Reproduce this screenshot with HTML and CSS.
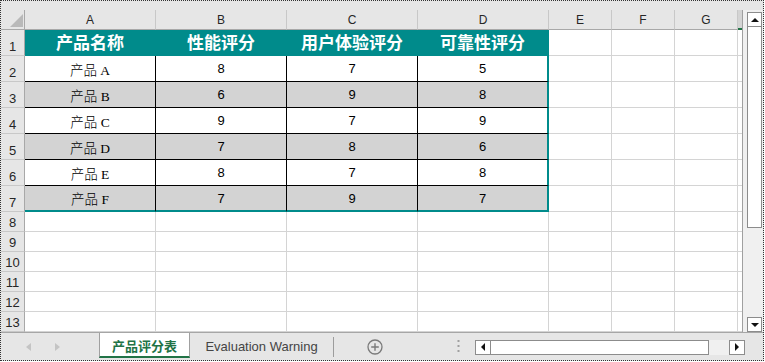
FILE: index.html
```html
<!DOCTYPE html>
<html>
<head>
<meta charset="utf-8">
<link rel="stylesheet" href="styles.css">
</head>
<body>
<div class="frame">
  <div class="main">
    <div class="sheet">
      <div class="corner"><span class="tri"></span></div>
      <div class="ch">A</div><div class="ch">B</div><div class="ch">C</div><div class="ch">D</div><div class="ch">E</div><div class="ch">F</div><div class="ch">G</div><div class="ch chh"></div>

      <div class="rh">1</div>
      <div class="c hd">产品名称</div><div class="c hd">性能评分</div><div class="c hd">用户体验评分</div><div class="c hd dl">可靠性评分</div>
      <div class="c"></div><div class="c"></div><div class="c"></div><div class="c h"></div>

      <div class="rh">2</div>
      <div class="c d nm">产品 A</div><div class="c d">8</div><div class="c d">7</div><div class="c d dl">5</div>
      <div class="c"></div><div class="c"></div><div class="c"></div><div class="c h"></div>

      <div class="rh">3</div>
      <div class="c d g nm">产品 B</div><div class="c d g">6</div><div class="c d g">9</div><div class="c d g dl">8</div>
      <div class="c"></div><div class="c"></div><div class="c"></div><div class="c h"></div>

      <div class="rh">4</div>
      <div class="c d nm">产品 C</div><div class="c d">9</div><div class="c d">7</div><div class="c d dl">9</div>
      <div class="c"></div><div class="c"></div><div class="c"></div><div class="c h"></div>

      <div class="rh">5</div>
      <div class="c d g nm">产品 D</div><div class="c d g">7</div><div class="c d g">8</div><div class="c d g dl">6</div>
      <div class="c"></div><div class="c"></div><div class="c"></div><div class="c h"></div>

      <div class="rh">6</div>
      <div class="c d nm">产品 E</div><div class="c d">8</div><div class="c d">7</div><div class="c d dl">8</div>
      <div class="c"></div><div class="c"></div><div class="c"></div><div class="c h"></div>

      <div class="rh">7</div>
      <div class="c d g nm last">产品 F</div><div class="c d g last">7</div><div class="c d g last">9</div><div class="c d g dl last">7</div>
      <div class="c"></div><div class="c"></div><div class="c"></div><div class="c h"></div>

      <div class="rh">8</div>
      <div class="c"></div><div class="c"></div><div class="c"></div><div class="c"></div><div class="c"></div><div class="c"></div><div class="c"></div><div class="c h"></div>
      <div class="rh">9</div>
      <div class="c"></div><div class="c"></div><div class="c"></div><div class="c"></div><div class="c"></div><div class="c"></div><div class="c"></div><div class="c h"></div>
      <div class="rh">10</div>
      <div class="c"></div><div class="c"></div><div class="c"></div><div class="c"></div><div class="c"></div><div class="c"></div><div class="c"></div><div class="c h"></div>
      <div class="rh">11</div>
      <div class="c"></div><div class="c"></div><div class="c"></div><div class="c"></div><div class="c"></div><div class="c"></div><div class="c"></div><div class="c h"></div>
      <div class="rh">12</div>
      <div class="c"></div><div class="c"></div><div class="c"></div><div class="c"></div><div class="c"></div><div class="c"></div><div class="c"></div><div class="c h"></div>
      <div class="rh">13</div>
      <div class="c"></div><div class="c"></div><div class="c"></div><div class="c"></div><div class="c"></div><div class="c"></div><div class="c"></div><div class="c h"></div>
    </div>
    <div class="vscroll">
      <div class="vbtn"><span class="ar-up"></span></div>
      <div class="vthumb"></div>
      <div class="vbtn vdown"><span class="ar-down"></span></div>
    </div>
  </div>
  <div class="tabbar">
    <div class="navs"><span class="nav-l"></span><span class="nav-r"></span></div>
    <div class="tab active">产品评分表</div>
    <div class="tab other">Evaluation Warning</div>
    <div class="sep"></div>
    <svg class="plus" width="16" height="16" viewBox="0 0 16 16"><circle cx="8" cy="8" r="7" fill="none" stroke="#7a7a7a" stroke-width="1.3"/><path d="M8 4.2V11.8M4.2 8H11.8" stroke="#7a7a7a" stroke-width="1.4"/></svg>
    <svg class="dots" width="3" height="13" viewBox="0 0 3 13"><rect x="0.5" y="0" width="2" height="2" fill="#a0a0a0"/><rect x="0.5" y="5" width="2" height="2" fill="#a0a0a0"/><rect x="0.5" y="10" width="2" height="2" fill="#a0a0a0"/></svg>
    <div class="hscroll">
      <div class="hbtn"><span class="ar-left"></span></div>
      <div class="hthumb"></div>
      <div class="htrack"></div>
      <div class="hbtn"><span class="ar-right"></span></div>
    </div>
  </div>
</div>
</body>
</html>
```

FILE: styles.css
```css
* { box-sizing: border-box; }
html, body { margin: 0; padding: 0; background: #fff; }

.frame {
  width: 764px;
  height: 361px;
  border: 1px dotted #333;
  background: #e6e6e6;
  display: flex;
  flex-direction: column;
  font-family: "Liberation Sans", "Noto Sans CJK SC", sans-serif;
}

.main {
  display: flex;
  padding-top: 9px;
  height: 331px;
}

.sheet {
  display: grid;
  grid-template-columns: 24px 131px 131px 131px 131px 63px 63px 63px 4px;
  grid-template-rows: 20px repeat(7, 26px) repeat(6, 20px);
  background: #fff;
}

.corner {
  background: #e6e6e6;
  border-right: 1px solid #a8a8a8;
  border-bottom: 1px solid #a8a8a8;
  position: relative;
}
.tri {
  position: absolute;
  right: 1px;
  bottom: 2px;
  width: 13px;
  height: 13px;
  background: #b9b9b9;
  clip-path: polygon(100% 0, 100% 100%, 0 100%);
}

.ch {
  background: #e6e6e6;
  border-right: 1px solid #c8c8c8;
  border-bottom: 1px solid #a8a8a8;
  display: flex;
  align-items: center;
  justify-content: center;
  font-size: 12px;
  color: #262626;
}
.chh {
  background: #d4d4d4;
  border-right: none;
  border-bottom: 2px solid #217346;
}

.rh {
  background: #e6e6e6;
  border-right: 1px solid #a8a8a8;
  border-bottom: 1px solid #c8c8c8;
  display: flex;
  align-items: flex-end;
  justify-content: center;
  font-size: 13px;
  line-height: 15px;
  padding-bottom: 1px;
  color: #262626;
}

.c {
  border-right: 1px solid #d4d4d4;
  border-bottom: 1px solid #d4d4d4;
  display: flex;
  align-items: center;
  justify-content: center;
  color: #000;
}
.c.h { border-right: none; }

.hd {
  background: #008b8b;
  border-right-color: #008b8b;
  border-bottom-color: #008b8b;
  color: #fff;
  font-family: "Noto Sans CJK SC", sans-serif;
  font-weight: bold;
  font-size: 17px;
  padding-bottom: 2px;
}

.d {
  border-right-color: #000;
  border-bottom-color: #000;
  font-size: 13px;
}
.nm {
  font-family: "Liberation Serif", "Noto Sans CJK SC", serif;
  font-weight: 300;
  font-size: 13.5px;
}
.g { background: #d3d3d3; }
.dl { border-right: 2px solid #008b8b; }
.last { border-bottom: 2px solid #008b8b; }

.vscroll {
  width: 21px;
  border-left: 1px solid #a0a0a0;
  background: #f0f0f0;
  display: flex;
  flex-direction: column;
  padding: 2px 0 0 4px;
}
.vbtn {
  width: 15px;
  height: 15px;
  border: 1px solid #8c8c8c;
  background: #fff;
  display: flex;
  align-items: center;
  justify-content: center;
}
.vthumb {
  width: 15px;
  height: 201px;
  border: 1px solid #8c8c8c;
  border-top: none;
  background: #fff;
}
.vdown { margin-top: auto; }
.ar-up {
  width: 0; height: 0;
  border-left: 4px solid transparent;
  border-right: 4px solid transparent;
  border-bottom: 4px solid #111;
}
.ar-down {
  width: 0; height: 0;
  border-left: 4px solid transparent;
  border-right: 4px solid transparent;
  border-top: 4px solid #111;
}

.tabbar {
  height: 28px;
  border-top: 1px solid #a6a6a6;
  display: flex;
  align-items: center;
}
.navs {
  width: 98px;
  align-self: stretch;
  display: flex;
  align-items: center;
  padding-left: 25px;
  gap: 24px;
}
.nav-l {
  width: 0; height: 0;
  border-top: 4px solid transparent;
  border-bottom: 4px solid transparent;
  border-right: 5px solid #c4c4c4;
}
.nav-r {
  width: 0; height: 0;
  border-top: 4px solid transparent;
  border-bottom: 4px solid transparent;
  border-left: 5px solid #c4c4c4;
}
.tab {
  align-self: flex-start;
  height: 25px;
  display: flex;
  align-items: center;
  justify-content: center;
}
.tab.active {
  width: 91px;
  background: #fff;
  border-left: 1px solid #a0a0a0;
  border-right: 1px solid #a0a0a0;
  border-bottom: 2px solid #217346;
  color: #217346;
  font-family: "Noto Sans CJK SC", sans-serif;
  font-weight: bold;
  font-size: 13px;
  padding-top: 1px;
}
.tab.other {
  width: 143px;
  font-size: 13px;
  color: #444;
  padding-top: 2px;
}
.sep {
  width: 1px;
  height: 20px;
  background: #9c9c9c;
  margin-top: 1px;
}
.plus { margin-left: 33px; display: block; }
.dots { margin-left: 74px; display: block; }

.hscroll {
  margin-left: 15px;
  width: 270px;
  height: 15px;
  background: #f0f0f0;
  display: flex;
  margin-top: 1px;
}
.hbtn {
  width: 16px;
  height: 15px;
  border: 1px solid #8c8c8c;
  background: #fff;
  display: flex;
  align-items: center;
  justify-content: center;
}
.hthumb {
  width: 218px;
  height: 15px;
  border: 1px solid #8c8c8c;
  border-left: none;
  background: #fff;
}
.htrack { flex: 1; }
.ar-left {
  width: 0; height: 0;
  border-top: 4px solid transparent;
  border-bottom: 4px solid transparent;
  border-right: 4px solid #111;
}
.ar-right {
  width: 0; height: 0;
  border-top: 4px solid transparent;
  border-bottom: 4px solid transparent;
  border-left: 4px solid #111;
}
```
